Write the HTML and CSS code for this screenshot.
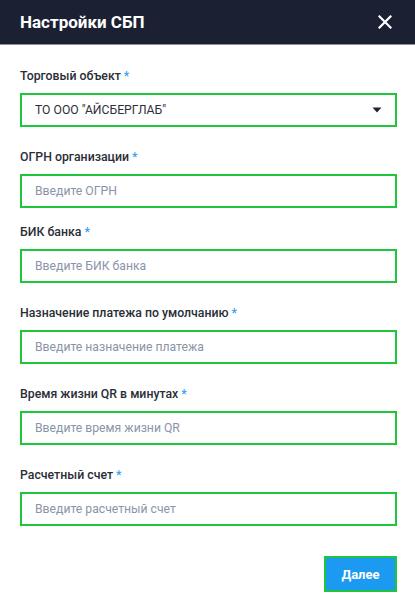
FILE: index.html
```html
<!DOCTYPE html>
<html lang="ru">
<head>
<meta charset="utf-8">
<title>Настройки СБП</title>
<link rel="stylesheet" href="styles.css">
</head>
<body>
<div class="modal">
  <header class="modal-header">
    <h1 class="modal-title">Настройки СБП</h1>
    <button class="close-btn" aria-label="Закрыть">
      <svg width="14" height="14" viewBox="0 0 14 14"><path d="M1.5 1.5 L12.5 12.5 M12.5 1.5 L1.5 12.5" stroke="#fff" stroke-width="2.2" stroke-linecap="square"/></svg>
    </button>
  </header>
  <div class="modal-body">
    <div class="field">
      <div class="label">Торговый объект <span class="req">*</span></div>
      <div class="box select">
        <span class="value">ТО ООО "АЙСБЕРГЛАБ"</span>
        <svg class="caret" width="10" height="6" viewBox="0 0 10 6"><path d="M0.5 0.5 H9.5 L5 5.5 Z" fill="#1f2430"/></svg>
      </div>
    </div>
    <div class="field field-tight">
      <div class="label">ОГРН организации <span class="req">*</span></div>
      <div class="box"><span class="ph">Введите ОГРН</span></div>
    </div>
    <div class="field">
      <div class="label">БИК банка <span class="req">*</span></div>
      <div class="box"><span class="ph">Введите БИК банка</span></div>
    </div>
    <div class="field">
      <div class="label">Назначение платежа по умолчанию <span class="req">*</span></div>
      <div class="box"><span class="ph">Введите назначение платежа</span></div>
    </div>
    <div class="field">
      <div class="label">Время жизни QR в минутах <span class="req">*</span></div>
      <div class="box"><span class="ph">Введите время жизни QR</span></div>
    </div>
    <div class="field">
      <div class="label">Расчетный счет <span class="req">*</span></div>
      <div class="box"><span class="ph">Введите расчетный счет</span></div>
    </div>
    <div class="actions">
      <button class="next-btn">Далее</button>
    </div>
  </div>
</div>
</body>
</html>
```
FILE: styles.css
```css
* { box-sizing: border-box; }
html, body { margin: 0; padding: 0; background: #fff; }
body { font-family: Roboto, "Noto Sans", sans-serif; width: 415px; height: 599px; overflow: hidden; }
.modal { display: flex; flex-direction: column; }
.modal-header {
  height: 45px;
  background: #1b2133;
  border-bottom: 1px solid #8a8f99;
  display: flex;
  align-items: center;
  justify-content: space-between;
  padding: 0 20px 0 20px;
}
.modal-title { margin: 0; color: #fff; font-size: 17px; font-weight: 700; line-height: 20px; }
.close-btn { background: none; border: 0; padding: 0; width: 16px; height: 16px; display: flex; align-items: center; justify-content: center; margin-right: 2px; }
.modal-body { padding: 22px 18px 0 20px; display: flex; flex-direction: column; }
.field { margin-bottom: 21px; }
.field-tight { margin-bottom: 15px; }
.label { font-size: 12.3px; font-weight: 500; color: #2a2e37; line-height: 18px; margin-bottom: 8px; }
.req { color: #3b9ff0; }
.box {
  height: 34px;
  border: 2px solid #1ec63c;
  display: flex;
  align-items: center;
  padding: 0 14px 0 13px;
  font-size: 12.2px;
}
.select { justify-content: space-between; padding-right: 13px; }
.value { color: #2b2f38; }
.ph { color: #8a94a8; }
.actions { display: flex; justify-content: flex-end; padding-top: 9px; }
.next-btn {
  width: 73px; height: 36px;
  background: #1c9af2;
  border: 2px solid #1ec63c;
  color: #fff;
  font-family: Roboto, sans-serif;
  font-size: 13px;
  font-weight: 700;
  padding: 0;
}
```
